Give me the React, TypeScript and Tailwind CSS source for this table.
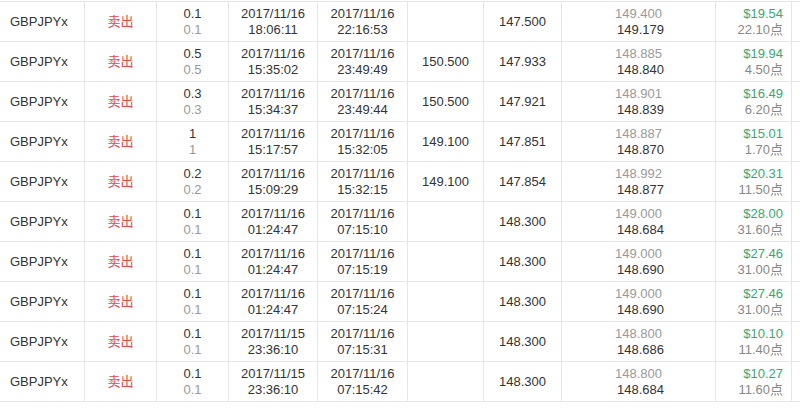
const rows = [
  { lot: "0.1", open: ["2017/11/16", "18:06:11"], close: ["2017/11/16", "22:16:53"], sl: "", tp: "147.500", price: ["149.400", "149.179"], profit: "$19.54", pts: "22.10点" },
  { lot: "0.5", open: ["2017/11/16", "15:35:02"], close: ["2017/11/16", "23:49:49"], sl: "150.500", tp: "147.933", price: ["148.885", "148.840"], profit: "$19.94", pts: "4.50点" },
  { lot: "0.3", open: ["2017/11/16", "15:34:37"], close: ["2017/11/16", "23:49:44"], sl: "150.500", tp: "147.921", price: ["148.901", "148.839"], profit: "$16.49", pts: "6.20点" },
  { lot: "1", open: ["2017/11/16", "15:17:57"], close: ["2017/11/16", "15:32:05"], sl: "149.100", tp: "147.851", price: ["148.887", "148.870"], profit: "$15.01", pts: "1.70点" },
  { lot: "0.2", open: ["2017/11/16", "15:09:29"], close: ["2017/11/16", "15:32:15"], sl: "149.100", tp: "147.854", price: ["148.992", "148.877"], profit: "$20.31", pts: "11.50点" },
  { lot: "0.1", open: ["2017/11/16", "01:24:47"], close: ["2017/11/16", "07:15:10"], sl: "", tp: "148.300", price: ["149.000", "148.684"], profit: "$28.00", pts: "31.60点" },
  { lot: "0.1", open: ["2017/11/16", "01:24:47"], close: ["2017/11/16", "07:15:19"], sl: "", tp: "148.300", price: ["149.000", "148.690"], profit: "$27.46", pts: "31.00点" },
  { lot: "0.1", open: ["2017/11/16", "01:24:47"], close: ["2017/11/16", "07:15:24"], sl: "", tp: "148.300", price: ["149.000", "148.690"], profit: "$27.46", pts: "31.00点" },
  { lot: "0.1", open: ["2017/11/15", "23:36:10"], close: ["2017/11/16", "07:15:31"], sl: "", tp: "148.300", price: ["148.800", "148.686"], profit: "$10.10", pts: "11.40点" },
  { lot: "0.1", open: ["2017/11/15", "23:36:10"], close: ["2017/11/16", "07:15:42"], sl: "", tp: "148.300", price: ["148.800", "148.684"], profit: "$10.27", pts: "11.60点" },
];

const cell = "border-r border-[#e6e6e6] flex flex-col justify-center items-center";

export default function App() {
  return (
    <div
      className="w-[800px] h-[408px] bg-white pt-[1px] text-[13px] leading-[16px] text-[#333]"
      style={{ fontFamily: '"Liberation Sans", "Noto Sans CJK SC", sans-serif' }}
    >
      <div className="border-b border-[#e6e6e6]">
        {rows.map((r, i) => (
          <div
            key={i}
            className="grid grid-cols-[85px_72px_72px_89px_90px_76px_78px_154px_76px_1fr] h-[40px] border-t border-[#e6e6e6]"
          >
            <div className="border-r border-[#e6e6e6] flex items-center pl-[10px]">GBPJPYx</div>
            <div className={cell}>
              <span className="text-[#e2474b]">卖出</span>
            </div>
            <div className={cell}>
              <span>{r.lot}</span>
              <span className="text-[#999]">{r.lot}</span>
            </div>
            <div className={cell}>
              <span>{r.open[0]}</span>
              <span>{r.open[1]}</span>
            </div>
            <div className={cell}>
              <span>{r.close[0]}</span>
              <span>{r.close[1]}</span>
            </div>
            <div className={cell}>
              <span>{r.sl}</span>
            </div>
            <div className={cell}>
              <span>{r.tp}</span>
            </div>
            <div className={cell}>
              <span className="text-[#999]">{r.price[0]}</span>
              <span className="pl-[4px]">{r.price[1]}</span>
            </div>
            <div className="border-r border-[#e6e6e6] flex flex-col justify-center items-end pr-[8px]">
              <span className="text-[#3aa673]">{r.profit}</span>
              <span className="text-[#888]">{r.pts}</span>
            </div>
            <div />
          </div>
        ))}
      </div>
    </div>
  );
}
